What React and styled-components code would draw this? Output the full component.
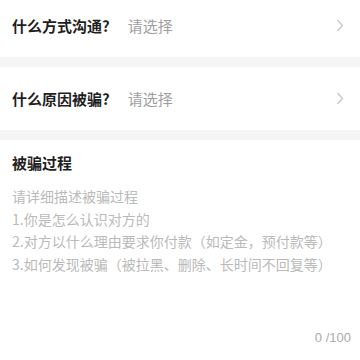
import styled, { createGlobalStyle } from 'styled-components'

const GlobalStyle = createGlobalStyle`
  body {
    margin: 0;
    background: #fff;
    font-family: "Noto Sans CJK SC", "Noto Sans", sans-serif;
    overflow: hidden;
  }
`

const Page = styled.div`
  margin-top: -6px;
  display: flex;
  flex-direction: column;
`
const Row = styled.div`
  height: 63px;
  padding: 0 16px 0 12px;
  display: flex;
  align-items: center;
  background: #fff;
`
const Label = styled.span`
  font-size: 15px;
  font-weight: 700;
  color: #1f1f1f;
`
const Value = styled.span`
  margin-left: 18px;
  font-size: 15px;
  color: #9e9e9e;
`
const Chevron = styled.svg`
  margin-left: auto;
  width: 8px;
  height: 13px;
`
const Gap = styled.div`
  height: 10px;
  background: #f5f5f5;
`
const Section = styled.div`
  padding: 12px 9px 0 12px;
  display: flex;
  flex-direction: column;
`
const Title = styled.div`
  font-size: 15px;
  font-weight: 700;
  line-height: 22px;
  color: #1f1f1f;
`
const Area = styled.textarea`
  margin-top: 11px;
  height: 145px;
  padding: 0;
  border: none;
  outline: none;
  resize: none;
  font-family: "Noto Sans CJK SC", "Noto Sans", sans-serif;
  font-size: 14px;
  line-height: 22.7px;
  color: #333;
  background: transparent;
  &::placeholder {
    color: #bababa;
  }
`
const Counter = styled.div`
  align-self: flex-end;
  font-family: "Liberation Sans", sans-serif;
  font-size: 13px;
  color: #ababab;
`

function Arrow() {
  return (
    <Chevron viewBox="0 0 8 13">
      <polyline points="1.5,1 6.5,6.5 1.5,12" fill="none" stroke="#c6c6c6" strokeWidth="1.3" />
    </Chevron>
  )
}

export default function App() {
  return (
    <>
      <GlobalStyle />
      <Page>
        <Row>
          <Label>什么方式沟通?</Label>
          <Value>请选择</Value>
          <Arrow />
        </Row>
        <Gap />
        <Row>
          <Label>什么原因被骗?</Label>
          <Value>请选择</Value>
          <Arrow />
        </Row>
        <Gap />
        <Section>
          <Title>被骗过程</Title>
          <Area
            placeholder={
              '请详细描述被骗过程\n1.你是怎么认识对方的\n2.对方以什么理由要求你付款（如定金，预付款等）\n3.如何发现被骗（被拉黑、删除、长时间不回复等）'
            }
          />
          <Counter>0 /100</Counter>
        </Section>
      </Page>
    </>
  )
}
